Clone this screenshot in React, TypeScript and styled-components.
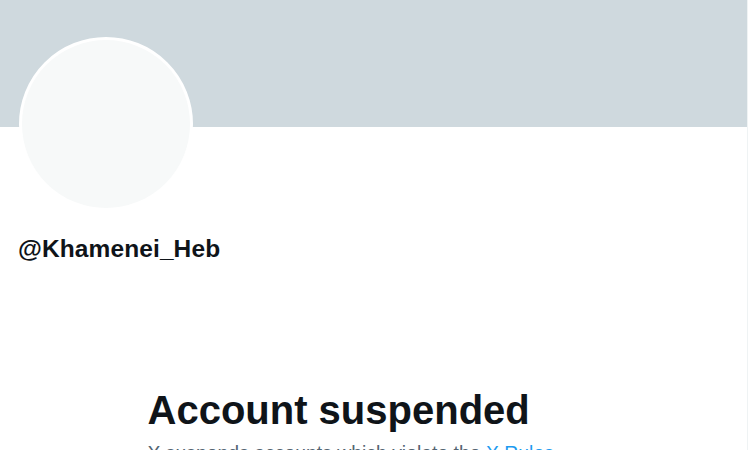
import React from "react";
import styled, { createGlobalStyle } from "styled-components";

const GlobalStyle = createGlobalStyle`
  html, body {
    margin: 0;
    padding: 0;
    background: #ffffff;
    overflow: hidden;
  }
  body {
    font-family: "Liberation Sans", Arial, sans-serif;
    color: #0f1419;
  }
`;

const App = () => {
  return (
    <>
      <GlobalStyle />
      <StyledColumn>
        <StyledBanner />
        <StyledProfileHeader>
          <StyledAvatar />
          <StyledHandle>@Khamenei_Heb</StyledHandle>
        </StyledProfileHeader>
        <StyledEmptyState>
          <StyledTitle>Account suspended</StyledTitle>
          <StyledMessage>
            X suspends accounts which violate the{" "}
            <StyledLink href="#">X Rules</StyledLink>.{" "}
            <StyledLink href="#">Learn more</StyledLink>
          </StyledMessage>
        </StyledEmptyState>
      </StyledColumn>
    </>
  );
};

export default App;

const StyledColumn = styled.div`
  width: 747px;
  min-height: 450px;
  border-right: 1px solid #eff3f4;
  display: flex;
  flex-direction: column;
`;

const StyledBanner = styled.div`
  flex-shrink: 0;
  height: 127px;
  background-color: #cfd9de;
`;

const StyledProfileHeader = styled.div`
  display: flex;
  flex-direction: column;
  align-items: flex-start;
  padding-left: 19px;
`;

const StyledAvatar = styled.div`
  flex-shrink: 0;
  width: 174px;
  height: 174px;
  box-sizing: border-box;
  margin-top: -90px;
  border-radius: 50%;
  border: 3px solid #ffffff;
  background-color: #f7f9f9;
`;

const StyledHandle = styled.div`
  margin-top: 22px;
  margin-left: -1px;
  font-size: 24.5px;
  line-height: 1.3;
  font-weight: 700;
  letter-spacing: 0.1px;
`;

const StyledEmptyState = styled.div`
  width: 452px;
  margin: 121px auto 0;
  display: flex;
  flex-direction: column;
`;

const StyledTitle = styled.h2`
  margin: 0;
  font-size: 40px;
  line-height: 48px;
  font-weight: 700;
  color: #0f1419;
`;

const StyledMessage = styled.p`
  margin: 7px 0 0;
  font-size: 19.4px;
  line-height: 1.3;
  color: #536471;
`;

const StyledLink = styled.a`
  color: #1d9bf0;
  text-decoration: none;
`;
